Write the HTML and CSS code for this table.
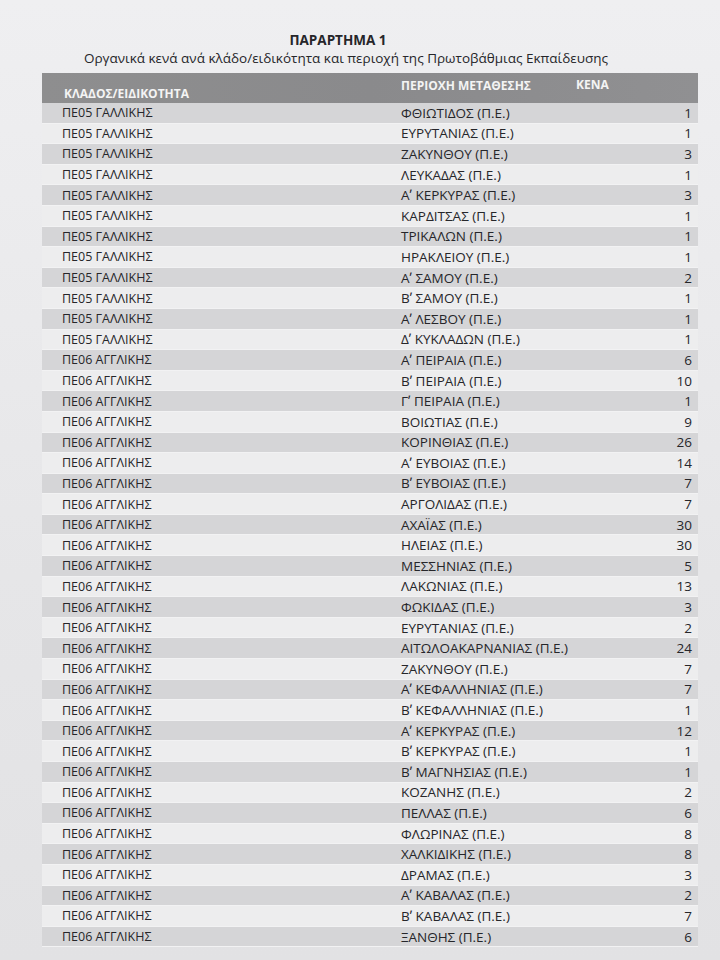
FILE: index.html
```html
<!DOCTYPE html>
<html lang="el">
<head>
<meta charset="utf-8">
<title>ΠΑΡΑΡΤΗΜΑ 1</title>
<link rel="stylesheet" href="styles.css">
</head>
<body>
<div class="sheet">
  <div class="title">ΠΑΡΑΡΤΗΜΑ 1</div>
  <div class="subtitle">Οργανικά κενά ανά κλάδο/ειδικότητα και περιοχή της Πρωτοβάθμιας Εκπαίδευσης</div>
  <div class="table">
    <div class="head">
      <div class="h1">ΚΛΑΔΟΣ/ΕΙΔΙΚΟΤΗΤΑ</div>
      <div class="h2">ΠΕΡΙΟΧΗ ΜΕΤΑΘΕΣΗΣ</div>
      <div class="h3">ΚΕΝΑ</div>
    </div>
    <div class="row"><span class="c1">ΠΕ05 ΓΑΛΛΙΚΗΣ</span><span class="c2">ΦΘΙΩΤΙΔΟΣ (Π.Ε.)</span><span class="c3">1</span></div>
    <div class="row"><span class="c1">ΠΕ05 ΓΑΛΛΙΚΗΣ</span><span class="c2">ΕΥΡΥΤΑΝΙΑΣ (Π.Ε.)</span><span class="c3">1</span></div>
    <div class="row"><span class="c1">ΠΕ05 ΓΑΛΛΙΚΗΣ</span><span class="c2">ΖΑΚΥΝΘΟΥ (Π.Ε.)</span><span class="c3">3</span></div>
    <div class="row"><span class="c1">ΠΕ05 ΓΑΛΛΙΚΗΣ</span><span class="c2">ΛΕΥΚΑΔΑΣ (Π.Ε.)</span><span class="c3">1</span></div>
    <div class="row"><span class="c1">ΠΕ05 ΓΑΛΛΙΚΗΣ</span><span class="c2">Αʹ ΚΕΡΚΥΡΑΣ (Π.Ε.)</span><span class="c3">3</span></div>
    <div class="row"><span class="c1">ΠΕ05 ΓΑΛΛΙΚΗΣ</span><span class="c2">ΚΑΡΔΙΤΣΑΣ (Π.Ε.)</span><span class="c3">1</span></div>
    <div class="row"><span class="c1">ΠΕ05 ΓΑΛΛΙΚΗΣ</span><span class="c2">ΤΡΙΚΑΛΩΝ (Π.Ε.)</span><span class="c3">1</span></div>
    <div class="row"><span class="c1">ΠΕ05 ΓΑΛΛΙΚΗΣ</span><span class="c2">ΗΡΑΚΛΕΙΟΥ (Π.Ε.)</span><span class="c3">1</span></div>
    <div class="row"><span class="c1">ΠΕ05 ΓΑΛΛΙΚΗΣ</span><span class="c2">Αʹ ΣΑΜΟΥ (Π.Ε.)</span><span class="c3">2</span></div>
    <div class="row"><span class="c1">ΠΕ05 ΓΑΛΛΙΚΗΣ</span><span class="c2">Βʹ ΣΑΜΟΥ (Π.Ε.)</span><span class="c3">1</span></div>
    <div class="row"><span class="c1">ΠΕ05 ΓΑΛΛΙΚΗΣ</span><span class="c2">Αʹ ΛΕΣΒΟΥ (Π.Ε.)</span><span class="c3">1</span></div>
    <div class="row"><span class="c1">ΠΕ05 ΓΑΛΛΙΚΗΣ</span><span class="c2">Δʹ ΚΥΚΛΑΔΩΝ (Π.Ε.)</span><span class="c3">1</span></div>
    <div class="row"><span class="c1">ΠΕ06 ΑΓΓΛΙΚΗΣ</span><span class="c2">Αʹ ΠΕΙΡΑΙΑ (Π.Ε.)</span><span class="c3">6</span></div>
    <div class="row"><span class="c1">ΠΕ06 ΑΓΓΛΙΚΗΣ</span><span class="c2">Βʹ ΠΕΙΡΑΙΑ (Π.Ε.)</span><span class="c3">10</span></div>
    <div class="row"><span class="c1">ΠΕ06 ΑΓΓΛΙΚΗΣ</span><span class="c2">Γʹ ΠΕΙΡΑΙΑ (Π.Ε.)</span><span class="c3">1</span></div>
    <div class="row"><span class="c1">ΠΕ06 ΑΓΓΛΙΚΗΣ</span><span class="c2">ΒΟΙΩΤΙΑΣ (Π.Ε.)</span><span class="c3">9</span></div>
    <div class="row"><span class="c1">ΠΕ06 ΑΓΓΛΙΚΗΣ</span><span class="c2">ΚΟΡΙΝΘΙΑΣ (Π.Ε.)</span><span class="c3">26</span></div>
    <div class="row"><span class="c1">ΠΕ06 ΑΓΓΛΙΚΗΣ</span><span class="c2">Αʹ ΕΥΒΟΙΑΣ (Π.Ε.)</span><span class="c3">14</span></div>
    <div class="row"><span class="c1">ΠΕ06 ΑΓΓΛΙΚΗΣ</span><span class="c2">Βʹ ΕΥΒΟΙΑΣ (Π.Ε.)</span><span class="c3">7</span></div>
    <div class="row"><span class="c1">ΠΕ06 ΑΓΓΛΙΚΗΣ</span><span class="c2">ΑΡΓΟΛΙΔΑΣ (Π.Ε.)</span><span class="c3">7</span></div>
    <div class="row"><span class="c1">ΠΕ06 ΑΓΓΛΙΚΗΣ</span><span class="c2">ΑΧΑΪΑΣ (Π.Ε.)</span><span class="c3">30</span></div>
    <div class="row"><span class="c1">ΠΕ06 ΑΓΓΛΙΚΗΣ</span><span class="c2">ΗΛΕΙΑΣ (Π.Ε.)</span><span class="c3">30</span></div>
    <div class="row"><span class="c1">ΠΕ06 ΑΓΓΛΙΚΗΣ</span><span class="c2">ΜΕΣΣΗΝΙΑΣ (Π.Ε.)</span><span class="c3">5</span></div>
    <div class="row"><span class="c1">ΠΕ06 ΑΓΓΛΙΚΗΣ</span><span class="c2">ΛΑΚΩΝΙΑΣ (Π.Ε.)</span><span class="c3">13</span></div>
    <div class="row"><span class="c1">ΠΕ06 ΑΓΓΛΙΚΗΣ</span><span class="c2">ΦΩΚΙΔΑΣ (Π.Ε.)</span><span class="c3">3</span></div>
    <div class="row"><span class="c1">ΠΕ06 ΑΓΓΛΙΚΗΣ</span><span class="c2">ΕΥΡΥΤΑΝΙΑΣ (Π.Ε.)</span><span class="c3">2</span></div>
    <div class="row"><span class="c1">ΠΕ06 ΑΓΓΛΙΚΗΣ</span><span class="c2">ΑΙΤΩΛΟΑΚΑΡΝΑΝΙΑΣ (Π.Ε.)</span><span class="c3">24</span></div>
    <div class="row"><span class="c1">ΠΕ06 ΑΓΓΛΙΚΗΣ</span><span class="c2">ΖΑΚΥΝΘΟΥ (Π.Ε.)</span><span class="c3">7</span></div>
    <div class="row"><span class="c1">ΠΕ06 ΑΓΓΛΙΚΗΣ</span><span class="c2">Αʹ ΚΕΦΑΛΛΗΝΙΑΣ (Π.Ε.)</span><span class="c3">7</span></div>
    <div class="row"><span class="c1">ΠΕ06 ΑΓΓΛΙΚΗΣ</span><span class="c2">Βʹ ΚΕΦΑΛΛΗΝΙΑΣ (Π.Ε.)</span><span class="c3">1</span></div>
    <div class="row"><span class="c1">ΠΕ06 ΑΓΓΛΙΚΗΣ</span><span class="c2">Αʹ ΚΕΡΚΥΡΑΣ (Π.Ε.)</span><span class="c3">12</span></div>
    <div class="row"><span class="c1">ΠΕ06 ΑΓΓΛΙΚΗΣ</span><span class="c2">Βʹ ΚΕΡΚΥΡΑΣ (Π.Ε.)</span><span class="c3">1</span></div>
    <div class="row"><span class="c1">ΠΕ06 ΑΓΓΛΙΚΗΣ</span><span class="c2">Βʹ ΜΑΓΝΗΣΙΑΣ (Π.Ε.)</span><span class="c3">1</span></div>
    <div class="row"><span class="c1">ΠΕ06 ΑΓΓΛΙΚΗΣ</span><span class="c2">ΚΟΖΑΝΗΣ (Π.Ε.)</span><span class="c3">2</span></div>
    <div class="row"><span class="c1">ΠΕ06 ΑΓΓΛΙΚΗΣ</span><span class="c2">ΠΕΛΛΑΣ (Π.Ε.)</span><span class="c3">6</span></div>
    <div class="row"><span class="c1">ΠΕ06 ΑΓΓΛΙΚΗΣ</span><span class="c2">ΦΛΩΡΙΝΑΣ (Π.Ε.)</span><span class="c3">8</span></div>
    <div class="row"><span class="c1">ΠΕ06 ΑΓΓΛΙΚΗΣ</span><span class="c2">ΧΑΛΚΙΔΙΚΗΣ (Π.Ε.)</span><span class="c3">8</span></div>
    <div class="row"><span class="c1">ΠΕ06 ΑΓΓΛΙΚΗΣ</span><span class="c2">ΔΡΑΜΑΣ (Π.Ε.)</span><span class="c3">3</span></div>
    <div class="row"><span class="c1">ΠΕ06 ΑΓΓΛΙΚΗΣ</span><span class="c2">Αʹ ΚΑΒΑΛΑΣ (Π.Ε.)</span><span class="c3">2</span></div>
    <div class="row"><span class="c1">ΠΕ06 ΑΓΓΛΙΚΗΣ</span><span class="c2">Βʹ ΚΑΒΑΛΑΣ (Π.Ε.)</span><span class="c3">7</span></div>
    <div class="row"><span class="c1">ΠΕ06 ΑΓΓΛΙΚΗΣ</span><span class="c2">ΞΑΝΘΗΣ (Π.Ε.)</span><span class="c3">6</span></div>
  </div>
</div>
</body>
</html>
```

FILE: styles.css
```css
html, body {
  margin: 0;
  padding: 0;
}
body {
  background: linear-gradient(#efeff1, #e6e6e8 60%, #e2e2e4);
  font-family: "Open Sans", "Noto Sans", "DejaVu Sans", sans-serif;
  color: #26262a;
  width: 720px;
  height: 960px;
  overflow: hidden;
}
.sheet {
  padding: 32px 0 0 40px;
  width: 660px;
}
.title {
  text-align: center;
  font-weight: bold;
  font-size: 13.5px;
  line-height: 17px;
  margin-right: 64px;
}
.subtitle {
  text-align: center;
  font-size: 13.5px;
  line-height: 18px;
  margin-right: 48px;
}
.table {
  margin-top: 6px;
  width: 656px;
  margin-left: 2px;
}
.head {
  display: grid;
  grid-template-columns: 356px 176px 1fr;
  background: linear-gradient(90deg, #8e8e8f, #8a8a8c 50%, #909092);
  height: 30px;
  color: #f4f4f4;
  font-weight: bold;
  font-size: 12px;
}
.h1 {
  padding-left: 22px;
  align-self: end;
  padding-bottom: 1px;
}
.h2 {
  align-self: start;
  padding-top: 4px;
  padding-left: 3px;
}
.h3 {
  align-self: start;
  padding-top: 3px;
  padding-left: 2px;
}
.row {
  display: grid;
  grid-template-columns: 356px 1fr 60px;
  height: 20.6px;
  align-items: center;
  font-size: 12.5px;
  border-bottom: 1px solid #f2f2f3;
  box-sizing: border-box;
}
.row:nth-child(even) {
  background: #d5d5d7;
}
.row:nth-child(odd) {
  background: #ededee;
}
.c1 {
  padding-left: 20px;
}
.c2 {
  padding-left: 3px;
  font-size: 13.5px;
}
.c3 {
  text-align: right;
  padding-right: 6px;
  font-size: 13.5px;
}
```
